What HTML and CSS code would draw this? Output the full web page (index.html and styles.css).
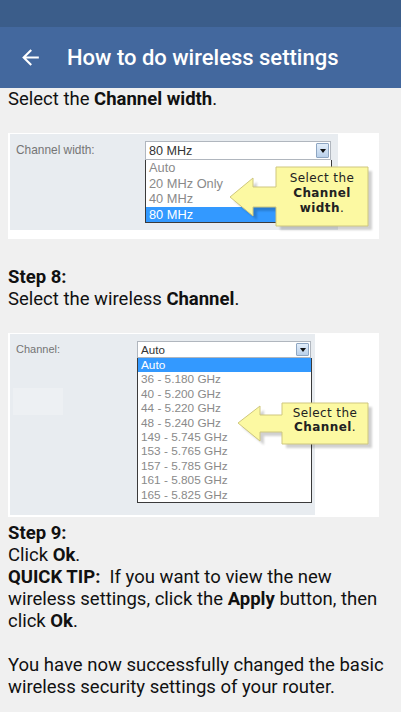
FILE: index.html
```html
<!DOCTYPE html>
<html>
<head>
<meta charset="utf-8">
<link rel="stylesheet" href="styles.css">
</head>
<body>
<div class="status"></div>
<header class="appbar">
  <svg class="back" viewBox="0 0 24 24"><path fill="#fff" d="M20 11H7.83l5.59-5.59L12 4l-8 8 8 8 1.41-1.41L7.83 13H20v-2z"/></svg>
  <h1>How to do wireless settings</h1>
</header>
<main class="content">
  <p>Select the <b>Channel width</b>.</p>
  <div class="shot shot1">
    <div class="panel">
      <span class="label">Channel width:</span>
      <div class="dd">
        <div class="sel"><span class="val">80 MHz</span><span class="btn"><i></i></span></div>
        <ul class="list">
          <li>Auto</li>
          <li>20 MHz Only</li>
          <li>40 MHz</li>
          <li class="hl">80 MHz</li>
        </ul>
      </div>
    </div>
    <div class="callout">
      <svg class="cshape" viewBox="0 0 148 70">
        <defs><filter id="b1"><feGaussianBlur stdDeviation="1.2"/></filter></defs>
        <path d="M2 32 L25 13 L25 22 L48 22 L48 2 L140 2 L140 61 L48 61 L48 42 L25 42 L25 51 Z" transform="translate(4 4)" fill="#000" opacity="0.18" filter="url(#b1)"/>
        <path d="M2 32 L25 13 L25 22 L48 22 L48 2 L140 2 L140 61 L48 61 L48 42 L25 42 L25 51 Z" fill="#fcf9a2" stroke="#cfc77e" stroke-width="1"/>
      </svg>
      <div class="ctext">Select the<br><b>Channel</b><br><b>width</b>.</div>
    </div>
  </div>
  <p><b>Step 8:</b></p>
  <p>Select the wireless <b>Channel</b>.</p>
  <div class="shot shot2">
    <div class="panel">
      <span class="label">Channel:</span>
      <div class="dd">
        <div class="sel"><span class="val">Auto</span><span class="btn"><i></i></span></div>
        <ul class="list">
          <li class="hl">Auto</li>
          <li>36 - 5.180 GHz</li>
          <li>40 - 5.200 GHz</li>
          <li>44 - 5.220 GHz</li>
          <li>48 - 5.240 GHz</li>
          <li>149 - 5.745 GHz</li>
          <li>153 - 5.765 GHz</li>
          <li>157 - 5.785 GHz</li>
          <li>161 - 5.805 GHz</li>
          <li>165 - 5.825 GHz</li>
        </ul>
      </div>
    </div>
    <div class="callout">
      <svg class="cshape" viewBox="0 0 140 52">
        <defs><filter id="b2"><feGaussianBlur stdDeviation="1.2"/></filter></defs>
        <path d="M2 22 L24 5 L24 14 L46 14 L46 2 L132 2 L132 43 L46 43 L46 31 L24 31 L24 40 Z" transform="translate(4 4)" fill="#000" opacity="0.18" filter="url(#b2)"/>
        <path d="M2 22 L24 5 L24 14 L46 14 L46 2 L132 2 L132 43 L46 43 L46 31 L24 31 L24 40 Z" fill="#fcf9a2" stroke="#cfc77e" stroke-width="1"/>
      </svg>
      <div class="ctext">Select the<br><b>Channel</b>.</div>
    </div>
  </div>
  <p><b>Step 9:</b></p>
  <p>Click <b>Ok</b>.</p>
  <p><b>QUICK TIP:</b>&nbsp; If you want to view the new wireless settings, click the <b>Apply</b> button, then click <b>Ok</b>.</p>
  <div class="gap"></div>
  <p>You have now successfully changed the basic wireless security settings of your router.</p>
</main>
</body>
</html>
```

FILE: styles.css
```css
* { box-sizing: border-box; }
html, body { margin: 0; padding: 0; }
body {
  background: #f0f0f0;
  font-family: Roboto, "Noto Sans", sans-serif;
  color: #111;
  width: 401px;
  overflow: hidden;
}
.status { height: 27px; background: #3b5d8a; }
.appbar {
  height: 61px;
  background: #43689e;
  display: flex;
  align-items: center;
  color: #fff;
}
.back { width: 25px; height: 25px; margin-left: 18px; margin-right: 24px; flex: none; }
.appbar h1 { margin: 0; font-size: 22px; font-weight: 500; }

.content { padding: 0 8px; font-size: 18.5px; line-height: 22px; }
.content p { margin: 0; }
.gap { height: 22px; }

.shot {
  position: relative;
  width: 371px;
  background: #fff;
  margin-top: 23px;
  padding: 1px 0 0 2px;
  font-family: "Liberation Sans", Arial, sans-serif;
}
.shot1 { height: 106px; margin-bottom: 27px; }
.shot2 { height: 184px; margin-bottom: 5px; }

.panel {
  background: #e8ecf0;
  display: flex;
  align-items: flex-start;
  padding: 7px 0 0 6px;
  position: relative;
}
.shot1 .panel { width: 328px; height: 96px; }
.shot2 .panel { width: 305px; height: 181px; }
.shot2 .panel::before {
  content: "";
  position: absolute;
  left: 3px; top: 54px; width: 50px; height: 27px;
  background: #edf0f3;
}

.label { color: #757575; flex: none; }
.shot1 .label { width: 129px; font-size: 11.9px; line-height: 19px; }
.shot2 .label { width: 121px; font-size: 11px; line-height: 17px; }

.dd { display: flex; flex-direction: column; }
.shot1 .dd { width: 187px; }
.shot2 .dd { width: 175px; }

.sel {
  display: flex;
  align-items: center;
  justify-content: space-between;
  background: #fff;
  border: 1px solid #b0b6be;
  color: #333;
  padding: 0 1px 0 3px;
}
.shot1 .sel { height: 19px; font-size: 12.6px; width: 186px; }
.shot2 .sel { height: 17px; font-size: 11.6px; width: 174px; }
.btn {
  width: 13px;
  align-self: stretch;
  margin: 1px 0;
  background: linear-gradient(#e3eefa, #b9d0ea);
  border: 1px solid #8ea6c2;
  border-radius: 1px;
  display: flex;
  align-items: center;
  justify-content: center;
}
.btn i {
  width: 0; height: 0;
  border-left: 3.5px solid transparent;
  border-right: 3.5px solid transparent;
  border-top: 4px solid #111;
}

.list {
  list-style: none;
  margin: 0;
  padding: 0;
  background: #fff;
  border: 1px solid #3a3a3a;
  border-top: none;
  color: #8a8a8a;
}
.list li { padding-left: 3px; white-space: nowrap; }
.shot1 .list li { font-size: 12.8px; line-height: 15.5px; }
.shot2 .list li { font-size: 11.8px; line-height: 14.4px; }
.list li.hl { background: #3399ff; color: #fff; }

.callout { position: absolute; }
.shot1 .callout { left: 220px; top: 32px; width: 148px; height: 70px; }
.shot2 .callout { left: 228px; top: 68px; width: 140px; height: 52px; }
.cshape { position: absolute; left: 0; top: 0; width: 100%; height: 100%; overflow: visible; }
.ctext {
  position: absolute;
  font-family: "DejaVu Sans", Verdana, sans-serif;
  font-size: 12px;
  letter-spacing: 0.4px;
  color: #222;
  text-align: center;
}
.ctext b { font-weight: bold; }
.shot1 .ctext { left: 48px; top: 4px; width: 92px; line-height: 14.8px; padding-top: 2px; }
.shot2 .ctext { left: 46px; top: 4px; width: 86px; line-height: 14.4px; padding-top: 1px; }
```
